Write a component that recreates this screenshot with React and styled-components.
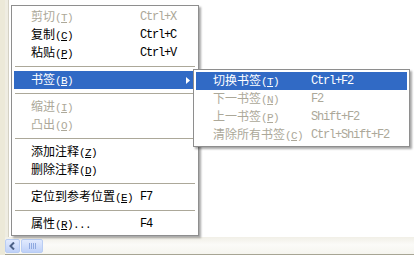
import React from "react";
import styled, { createGlobalStyle } from "styled-components";

const GlobalStyle = createGlobalStyle`
    html, body {
        margin: 0;
        padding: 0;
        background: #ffffff;
    }

    body {
        font-family: "Noto Sans CJK SC", sans-serif;
    }
`;

const Frame = styled.div`
    position: relative;
    display: flex;
    width: 414px;
    height: 255px;
    overflow: hidden;
    background: #ffffff;
`;

const Edge = styled.div`
    width: 5px;
    flex: none;
    background: #ece9d8;
`;

const Body = styled.div`
    flex: 1;
    display: flex;
    flex-direction: column;
`;

const Editor = styled.div`
    flex: 1;
    background: #ffffff;
    border-left: 3px solid #efede2;
    box-shadow: inset 1px 0 0 #d4d1c4;
`;

const HScroll = styled.div`
    height: 18px;
    flex: none;
    display: flex;
    align-items: flex-end;
    gap: 1px;
    box-sizing: border-box;
    padding-bottom: 1px;
    background: linear-gradient(#f1efe7, #fbfbf8 45%, #f6f5ef);
    border-bottom: 1px solid #a7a594;
`;

const ScrollButton = styled.div`
    width: 15px;
    height: 14px;
    box-sizing: border-box;
    display: flex;
    align-items: center;
    justify-content: center;
    border: 1px solid #b9cdf3;
    border-radius: 2px;
    background: linear-gradient(#e1eafe, #bfd1f8);
`;

const Thumb = styled(ScrollButton)`
    width: 22px;
    gap: 1px;

    & i {
        display: block;
        width: 1px;
        height: 6px;
        background: #8fa9e0;
    }
`;

const Menu = styled.div`
    position: absolute;
    left: ${(p) => p.$left}px;
    top: ${(p) => p.$top}px;
    width: ${(p) => p.$width}px;
    box-sizing: border-box;
    padding: 2px;
    background: #ffffff;
    border: 1px solid #8e8e8e;
    box-shadow: 2px 2px 2px rgba(0, 0, 0, 0.35);
    z-index: ${(p) => p.$layer || 1};
`;

const Item = styled.div`
    display: flex;
    align-items: center;
    height: 18px;
    padding-left: 17px;
    font-size: 12px;
    line-height: 18px;
    white-space: nowrap;
    color: ${(p) => (p.$active ? "#ffffff" : p.$disabled ? "#aca899" : "#000000")};
    background: ${(p) => (p.$active ? "#316ac5" : "transparent")};
`;

const Label = styled.span`
    flex: none;
    width: ${(p) => p.$width}px;
`;

const Key = styled.span`
    font-family: "Liberation Mono", monospace;
    font-size: 11px;
    letter-spacing: -0.6px;

    & u {
        text-underline-offset: 1px;
    }
`;

const Shortcut = styled.span`
    flex: 1;
    font-family: "Liberation Mono", monospace;
    font-size: 12px;
    letter-spacing: -1.2px;
`;

const Arrow = styled.svg`
    flex: none;
    margin-right: 6px;
`;

const Separator = styled.div`
    height: 9px;
    display: flex;
    align-items: center;

    &::after {
        content: "";
        flex: 1;
        height: 1px;
        margin: 0 1px;
        background: #aca899;
    }
`;

const mainItems = [
    { text: "剪切", key: "T", shortcut: "Ctrl+X", disabled: true },
    { text: "复制", key: "C", shortcut: "Ctrl+C" },
    { text: "粘贴", key: "P", shortcut: "Ctrl+V" },
    { sep: true },
    { text: "书签", key: "B", active: true, sub: true },
    { sep: true },
    { text: "缩进", key: "I", disabled: true },
    { text: "凸出", key: "O", disabled: true },
    { sep: true },
    { text: "添加注释", key: "Z" },
    { text: "删除注释", key: "D" },
    { sep: true },
    { text: "定位到参考位置", key: "E", shortcut: "F7" },
    { sep: true },
    { text: "属性", key: "R", tail: "...", shortcut: "F4" },
];

const bookmarkItems = [
    { text: "切换书签", key: "T", shortcut: "Ctrl+F2", active: true },
    { text: "下一书签", key: "N", shortcut: "F2", disabled: true },
    { text: "上一书签", key: "P", shortcut: "Shift+F2", disabled: true },
    { text: "清除所有书签", key: "C", shortcut: "Ctrl+Shift+F2", disabled: true },
];

function MenuRows({ items, labelWidth }) {
    return items.map((it, i) =>
        it.sep ? (
            <Separator key={i} />
        ) : (
            <Item key={i} $active={it.active} $disabled={it.disabled}>
                <Label $width={labelWidth}>
                    {it.text}
                    <Key>
                        (<u>{it.key}</u>){it.tail}
                    </Key>
                </Label>
                <Shortcut>{it.shortcut}</Shortcut>
                {it.sub && (
                    <Arrow width="4" height="7" viewBox="0 0 4 7">
                        <polygon points="0,0 4,3.5 0,7" fill="currentColor" />
                    </Arrow>
                )}
            </Item>
        )
    );
}

export default function App() {
    return (
        <Frame>
            <GlobalStyle />
            <Edge />
            <Body>
                <Editor />
                <HScroll>
                    <ScrollButton>
                        <svg width="7" height="8" viewBox="0 0 7 8">
                            <polyline points="5,0.5 1.5,4 5,7.5" fill="none" stroke="#4d6185" strokeWidth="2" />
                        </svg>
                    </ScrollButton>
                    <Thumb>
                        <i />
                        <i />
                        <i />
                        <i />
                    </Thumb>
                </HScroll>
            </Body>

            <Menu $left={11} $top={5} $width={188}>
                <MenuRows items={mainItems} labelWidth={109} />
            </Menu>

            <Menu $left={193} $top={69} $width={217} $layer={2}>
                <MenuRows items={bookmarkItems} labelWidth={98} />
            </Menu>
        </Frame>
    );
}
